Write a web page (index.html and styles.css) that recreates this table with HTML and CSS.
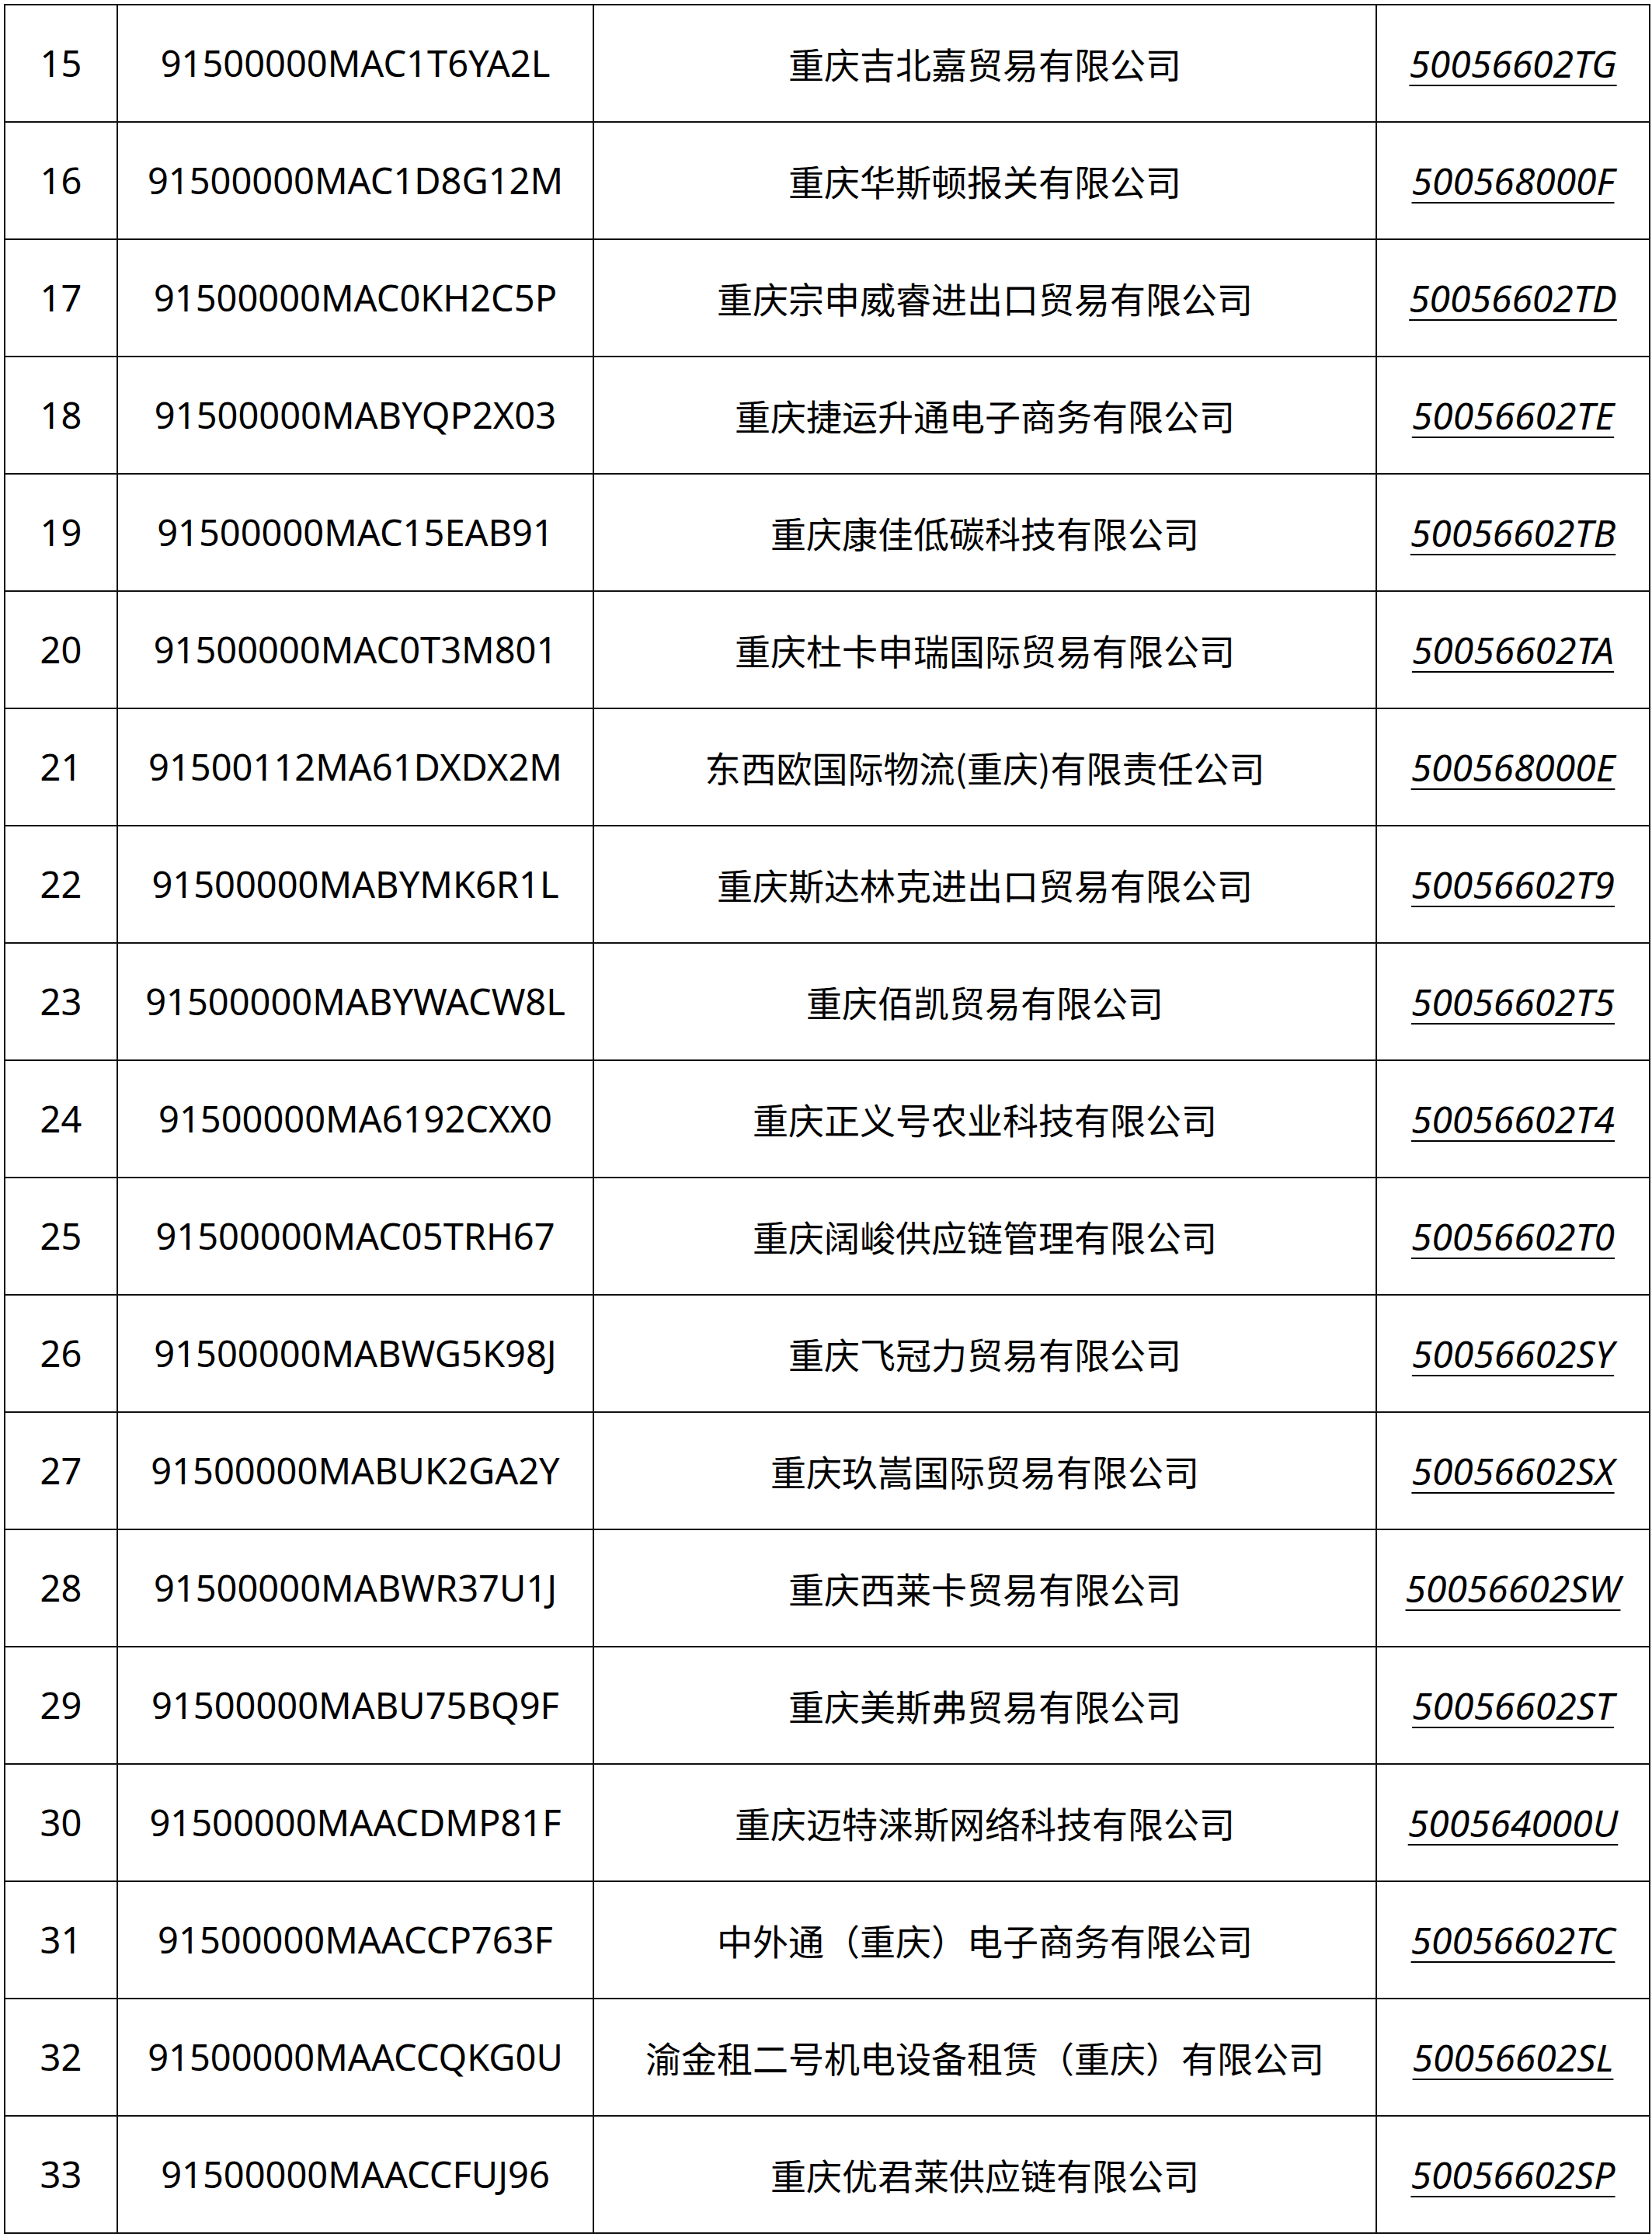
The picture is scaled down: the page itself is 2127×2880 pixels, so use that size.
FILE: index.html
```html
<!DOCTYPE html>
<html lang="zh-CN">
<head>
<meta charset="utf-8">
<title>企业名单</title>
<link rel="stylesheet" href="styles.css">
</head>
<body>
<table class="list">
  <colgroup>
    <col class="c-no">
    <col class="c-id">
    <col class="c-name">
    <col class="c-code">
  </colgroup>
  <tbody>
    <tr><td>15</td><td>91500000MAC1T6YA2L</td><td class="name">重庆吉北嘉贸易有限公司</td><td><span class="code">50056602TG</span></td></tr>
    <tr><td>16</td><td>91500000MAC1D8G12M</td><td class="name">重庆华斯顿报关有限公司</td><td><span class="code">500568000F</span></td></tr>
    <tr><td>17</td><td>91500000MAC0KH2C5P</td><td class="name">重庆宗申威睿进出口贸易有限公司</td><td><span class="code">50056602TD</span></td></tr>
    <tr><td>18</td><td>91500000MABYQP2X03</td><td class="name">重庆捷运升通电子商务有限公司</td><td><span class="code">50056602TE</span></td></tr>
    <tr><td>19</td><td>91500000MAC15EAB91</td><td class="name">重庆康佳低碳科技有限公司</td><td><span class="code">50056602TB</span></td></tr>
    <tr><td>20</td><td>91500000MAC0T3M801</td><td class="name">重庆杜卡申瑞国际贸易有限公司</td><td><span class="code">50056602TA</span></td></tr>
    <tr><td>21</td><td>91500112MA61DXDX2M</td><td class="name">东西欧国际物流(重庆)有限责任公司</td><td><span class="code">500568000E</span></td></tr>
    <tr><td>22</td><td>91500000MABYMK6R1L</td><td class="name">重庆斯达林克进出口贸易有限公司</td><td><span class="code">50056602T9</span></td></tr>
    <tr><td>23</td><td>91500000MABYWACW8L</td><td class="name">重庆佰凯贸易有限公司</td><td><span class="code">50056602T5</span></td></tr>
    <tr><td>24</td><td>91500000MA6192CXX0</td><td class="name">重庆正义号农业科技有限公司</td><td><span class="code">50056602T4</span></td></tr>
    <tr><td>25</td><td>91500000MAC05TRH67</td><td class="name">重庆阔峻供应链管理有限公司</td><td><span class="code">50056602T0</span></td></tr>
    <tr><td>26</td><td>91500000MABWG5K98J</td><td class="name">重庆飞冠力贸易有限公司</td><td><span class="code">50056602SY</span></td></tr>
    <tr><td>27</td><td>91500000MABUK2GA2Y</td><td class="name">重庆玖嵩国际贸易有限公司</td><td><span class="code">50056602SX</span></td></tr>
    <tr><td>28</td><td>91500000MABWR37U1J</td><td class="name">重庆西莱卡贸易有限公司</td><td><span class="code">50056602SW</span></td></tr>
    <tr><td>29</td><td>91500000MABU75BQ9F</td><td class="name">重庆美斯弗贸易有限公司</td><td><span class="code">50056602ST</span></td></tr>
    <tr><td>30</td><td>91500000MAACDMP81F</td><td class="name">重庆迈特涞斯网络科技有限公司</td><td><span class="code">500564000U</span></td></tr>
    <tr><td>31</td><td>91500000MAACCP763F</td><td class="name">中外通（重庆）电子商务有限公司</td><td><span class="code">50056602TC</span></td></tr>
    <tr><td>32</td><td>91500000MAACCQKG0U</td><td class="name">渝金租二号机电设备租赁（重庆）有限公司</td><td><span class="code">50056602SL</span></td></tr>
    <tr><td>33</td><td>91500000MAACCFUJ96</td><td class="name">重庆优君莱供应链有限公司</td><td><span class="code">50056602SP</span></td></tr>
  </tbody>
</table>
</body>
</html>
```

FILE: styles.css
```css
html, body {
  margin: 0;
  padding: 0;
  background: #ffffff;
}

body {
  font-family: "Noto Sans", "Noto Sans CJK SC", sans-serif;
  color: #000000;
}

.list {
  margin: 5px 0 0 5px;
  width: 2118px;
  border-collapse: collapse;
  table-layout: fixed;
  border: 2px solid #111111;
}

.c-no { width: 145px; }
.c-id { width: 613px; }
.c-name { width: 1008px; }
.c-code { width: 352px; }

.list tr {
  height: 151px;
}

.list td {
  border: 2px solid #111111;
  padding: 0;
  text-align: center;
  vertical-align: middle;
  font-size: 47px;
  line-height: 1.2;
  white-space: nowrap;
}

.list td.name {
  font-family: "Noto Sans CJK SC", sans-serif;
  font-size: 46px;
}

.code {
  font-size: 48px;
  font-style: italic;
  text-decoration: underline;
  text-decoration-thickness: 2px;
  text-underline-offset: 9px;
}
```
